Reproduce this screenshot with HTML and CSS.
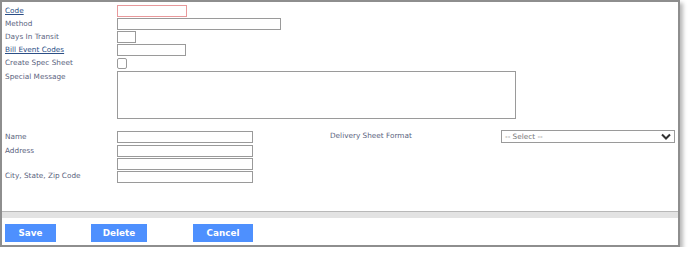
FILE: index.html
```html
<!DOCTYPE html>
<html lang="en">
<head>
    <meta charset="UTF-8">
    <title>Delivery Setup</title>
    <link rel="stylesheet" href="styles.css">
</head>
<body>
    <div class="panel">
        <div class="form">
            <div class="row">
                <a class="label link" href="#">Code</a>
                <input type="text" class="field required w-code">
            </div>
            <div class="row">
                <span class="label">Method</span>
                <input type="text" class="field w-method">
            </div>
            <div class="row">
                <span class="label">Days In Transit</span>
                <input type="text" class="field w-days">
            </div>
            <div class="row">
                <a class="label link" href="#">Bill Event Codes</a>
                <input type="text" class="field w-bill">
            </div>
            <div class="row">
                <span class="label">Create Spec Sheet</span>
                <span class="check"></span>
            </div>
            <div class="row">
                <span class="label">Special Message</span>
                <textarea class="field message"></textarea>
            </div>

            <div class="address">
                <div class="col">
                    <div class="row">
                        <span class="label">Name</span>
                        <input type="text" class="field w-addr">
                    </div>
                    <div class="row">
                        <span class="label">Address</span>
                        <input type="text" class="field w-addr">
                    </div>
                    <div class="row">
                        <span class="label"></span>
                        <input type="text" class="field w-addr">
                    </div>
                    <div class="row">
                        <span class="label">City, State, Zip Code</span>
                        <input type="text" class="field w-addr">
                    </div>
                </div>
                <div class="col right">
                    <div class="row">
                        <span class="label wide">Delivery Sheet Format</span>
                        <div class="select">
                            <span>-- Select --</span>
                            <svg width="10" height="7" viewBox="0 0 10 7"><path d="M1 1.5 L5 5.5 L9 1.5" fill="none" stroke="#333" stroke-width="2"/></svg>
                        </div>
                    </div>
                </div>
            </div>
        </div>

        <div class="band"></div>

        <div class="actions">
            <button class="btn save">Save</button>
            <button class="btn delete">Delete</button>
            <button class="btn cancel">Cancel</button>
        </div>
    </div>
</body>
</html>
```

FILE: styles.css
```css
body {
    margin: 0;
    background-color: #fff;
    font-family: 'DejaVu Sans', Verdana, sans-serif;
    font-size: 7.3px;
    color: #5b6480;
}
.panel {
    width: 676px;
    height: 243px;
    border: 2px solid #8e8e8e;
    box-shadow: 3px 3px 4px rgba(0, 0, 0, 0.28);
    background-color: #fff;
    display: flex;
    flex-direction: column;
}
.form {
    padding: 3px 0 0 3px;
    height: 206px;
}
.row {
    display: flex;
    align-items: flex-start;
    margin-bottom: 1px;
}
.label {
    width: 112px;
    flex-shrink: 0;
    line-height: 11px;
    color: #5b6480;
    text-decoration: none;
}
.label.link {
    color: #2c4f86;
    text-decoration: underline;
}
.label.wide {
    width: 171px;
    line-height: 9px;
}
.field {
    box-sizing: border-box;
    height: 12px;
    margin: 0;
    padding: 0;
    border: 1px solid #9a9a9a;
    background: #fff;
    font-family: inherit;
    font-size: inherit;
}
.field.required {
    border-color: #e8999b;
}
.w-code { width: 70px; }
.w-method { width: 164px; }
.w-days { width: 19px; }
.w-bill { width: 69px; }
.w-addr { width: 136px; }
.check {
    box-sizing: border-box;
    width: 10px;
    height: 11px;
    margin-top: 1px;
    border: 1px solid #9a9a9a;
    border-radius: 2px;
    margin-bottom: 1px;
}
.message {
    width: 399px;
    height: 48px;
    resize: none;
}
.address {
    display: flex;
    margin-top: 12px;
}
.address .row {
    margin-bottom: 1px;
}
.address .row:first-child {
    margin-bottom: 2px;
}
.address .row:last-child .label {
    line-height: 9px;
}
.col.right {
    margin-left: 77px;
}
.select {
    box-sizing: border-box;
    width: 174px;
    height: 13px;
    margin-top: -1px;
    border: 1px solid #9a9a9a;
    display: flex;
    align-items: center;
    justify-content: space-between;
    padding: 0 3px 0 3px;
    color: #777;
}
.band {
    height: 6px;
    border-top: 1px solid #b8b8b8;
    background-color: #e3e3e3;
}
.actions {
    flex: 1;
    display: flex;
    align-items: flex-start;
    padding: 6px 0 0 3px;
}
.btn {
    height: 18px;
    border: none;
    padding: 0;
    background-color: #4e90fe;
    color: #fff;
    font-family: 'DejaVu Sans', Verdana, sans-serif;
    font-size: 8.8px;
    font-weight: bold;
    cursor: pointer;
}
.save { width: 51px; }
.delete { width: 56px; margin-left: 35px; }
.cancel { width: 60px; margin-left: 46px; }
```
